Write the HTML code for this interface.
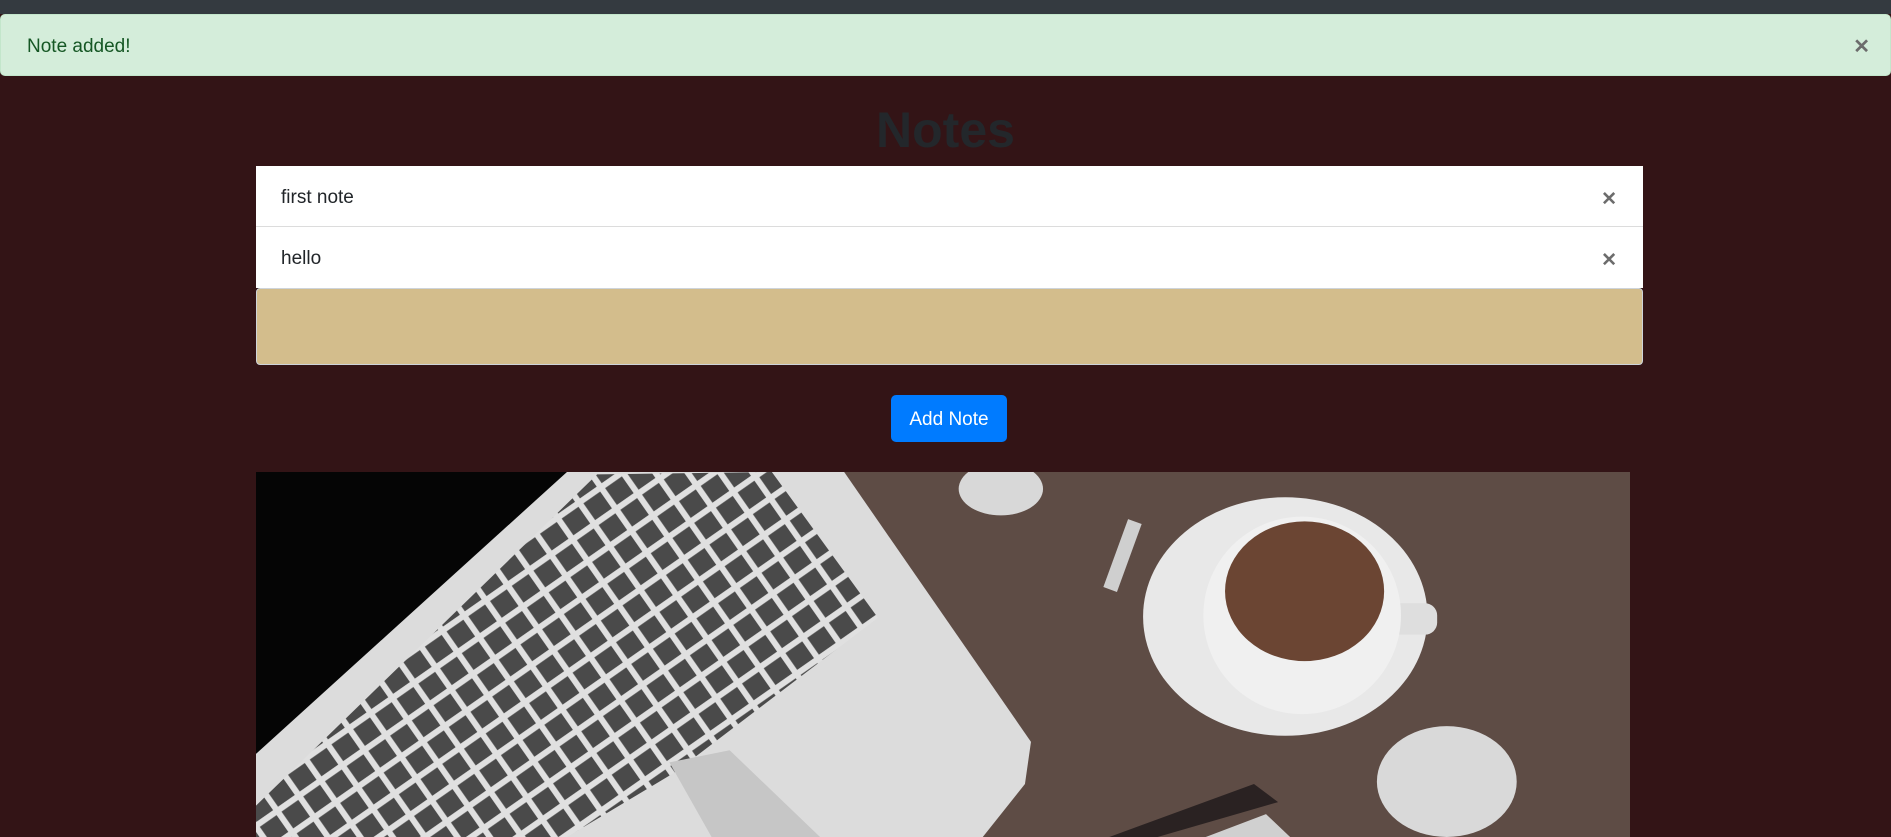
<!DOCTYPE html>
<html><head><style>
*{box-sizing:border-box;margin:0;padding:0}
body{width:1891px;height:837px;overflow:hidden;background:#331416;font-family:"Liberation Sans",sans-serif;position:relative}
.top{position:absolute;left:0;top:0;width:1891px;height:14px;background:#343a40}
.alert{position:absolute;left:0;top:14px;width:1891px;height:62px;background:#d4edda;border:1px solid #c3e6cb;border-radius:5px;color:#155724;font-size:19px;padding:0 0 0 26px;line-height:64px}
.x{position:absolute;font-size:22px;color:#6c6c6c;line-height:1;font-weight:bold}
h1{position:absolute;top:98px;left:0;width:1891px;text-align:center;font-size:50px;color:#23272b;font-weight:bold;line-height:64px}
.item{position:absolute;left:256px;width:1387px;background:#fff;font-size:19px;color:#212529;padding-left:25px}
.ta{position:absolute;left:256px;top:288px;width:1387px;height:77px;background:#d3bd8c;border:1px solid #ced4da;border-radius:4px}
.btn{position:absolute;left:891px;top:395px;width:116px;height:47px;background:#007bff;border-radius:5px;color:#fff;font-size:19px;text-align:center;line-height:49px}
svg{position:absolute;left:256px;top:472px}
</style></head><body>
<div class="top"></div>
<div class="alert">Note added!<span class="x" style="right:20px;top:22px;font-size:20px">✕</span></div>
<h1>Notes</h1>
<div class="item" style="top:166px;height:61px;line-height:64px;border-bottom:1px solid #dcdcdc">first note<span class="x" style="right:26px;top:24px;font-size:19px">✕</span></div>
<div class="item" style="top:227px;height:61px;line-height:64px">hello<span class="x" style="right:26px;top:24px;font-size:19px">✕</span></div>
<div class="ta"></div>
<div class="btn">Add Note</div>
<svg width="1374" height="365" viewBox="212 391 1140 303" preserveAspectRatio="none">
<defs>
<pattern id="k" width="22" height="22" patternUnits="userSpaceOnUse" patternTransform="rotate(-35)">
<rect width="22" height="22" fill="#e0e0e0"/><rect x="3" y="3" width="17" height="17" fill="#4a4a4a"/>
</pattern>
<clipPath id="c"><rect x="212" y="391" width="1140" height="303"/></clipPath>
</defs>
<g clip-path="url(#c)">
<rect x="212" y="391" width="1140" height="303" fill="#5e4c45"/>
<polygon points="212,391 480,391 212,630" fill="#050505"/>
<polygon points="470,391 700,391 855,615 850,650 815,694 212,694 212,625" fill="#dcdcdc"/>
<polygon points="495,393 640,391 728,512 560,640 470,694 212,694 212,668" fill="url(#k)"/>
<polygon points="555,632 605,622 680,694 590,694" fill="#c6c6c6"/>
<ellipse cx="830" cy="405" rx="35" ry="22" fill="#d8d8d8"/>
<ellipse cx="1066" cy="511" rx="118" ry="99" fill="#e8e8e8"/>
<rect x="1150" y="500" width="42" height="26" rx="10" fill="#dedede"/>
<circle cx="1080" cy="510" r="82" fill="#f0f0f0"/>
<ellipse cx="1082" cy="490" rx="66" ry="58" fill="#6b4533"/>
<ellipse cx="1200" cy="648" rx="58" ry="46" fill="#d9d9d9"/>
<polygon points="920,694 1040,650 1060,665 960,694" fill="#2a2222"/>
<polygon points="1000,694 1050,675 1070,694" fill="#d0d0d0"/>
<rect x="925" y="430" width="12" height="60" fill="#cfcfcf" transform="rotate(20 930 460)"/>
</g>
</svg>
</body></html>
